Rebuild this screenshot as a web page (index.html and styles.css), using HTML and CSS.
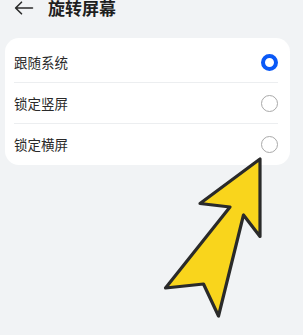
FILE: index.html
```html
<!DOCTYPE html>
<html lang="zh">
<head>
<meta charset="utf-8">
<link rel="stylesheet" href="styles.css">
</head>
<body>
<div class="page">
  <header class="header">
    <svg class="back" width="20" height="14" viewBox="0 0 20 14">
      <path d="M18.5 7H2 M7.5 1.2L1.6 7L7.5 12.8" fill="none" stroke="#2b2b2b" stroke-width="1.6" stroke-linecap="round" stroke-linejoin="round"/>
    </svg>
    <h1 class="title">旋转屏幕</h1>
  </header>
  <section class="card">
    <div class="row"><span class="label">跟随系统</span><span class="radio on"></span></div>
    <div class="row"><span class="label">锁定竖屏</span><span class="radio"></span></div>
    <div class="row"><span class="label">锁定横屏</span><span class="radio"></span></div>
  </section>
  <svg class="pointer" width="303" height="335" viewBox="0 0 303 335">
    <path d="M260 159 L260 236.5 L243.5 215 L218.5 316 L203.5 284 L165.5 288 L230 207 L200 203.5 Z" fill="#f9d51c" stroke="#2a2a2a" stroke-width="3.2" stroke-linejoin="round"/>
  </svg>
</div>
</body>
</html>
```
FILE: styles.css
```css
html, body {
  margin: 0;
  padding: 0;
  background: #f1f3f5;
}
.page {
  position: relative;
  width: 303px;
  height: 335px;
  overflow: hidden;
  font-family: "Noto Sans CJK SC", "Noto Sans", sans-serif;
}
.header {
  display: flex;
  align-items: center;
  height: 16px;
  padding-left: 14px;
}
.back {
  display: block;
}
.title {
  margin: 0 0 0 14px;
  font-size: 17px;
  line-height: 16px;
  font-weight: 700;
  color: #1f1f1f;
}
.card {
  margin: 22px 13px 0 5px;
  background: #ffffff;
  border-radius: 14px;
  padding: 4px 12px 1px 9px;
}
.row {
  display: flex;
  align-items: center;
  justify-content: space-between;
  height: 40px;
}
.row + .row {
  border-top: 1px solid #eceef0;
}
.label {
  font-size: 13.5px;
  color: #2a2a2a;
}
.radio {
  box-sizing: border-box;
  width: 17px;
  height: 17px;
  border-radius: 50%;
  border: 1.2px solid #a9a9a9;
}
.radio.on {
  border: 4.5px solid #0a59f7;
}
.pointer {
  position: absolute;
  left: 0;
  top: 0;
  pointer-events: none;
}
```
